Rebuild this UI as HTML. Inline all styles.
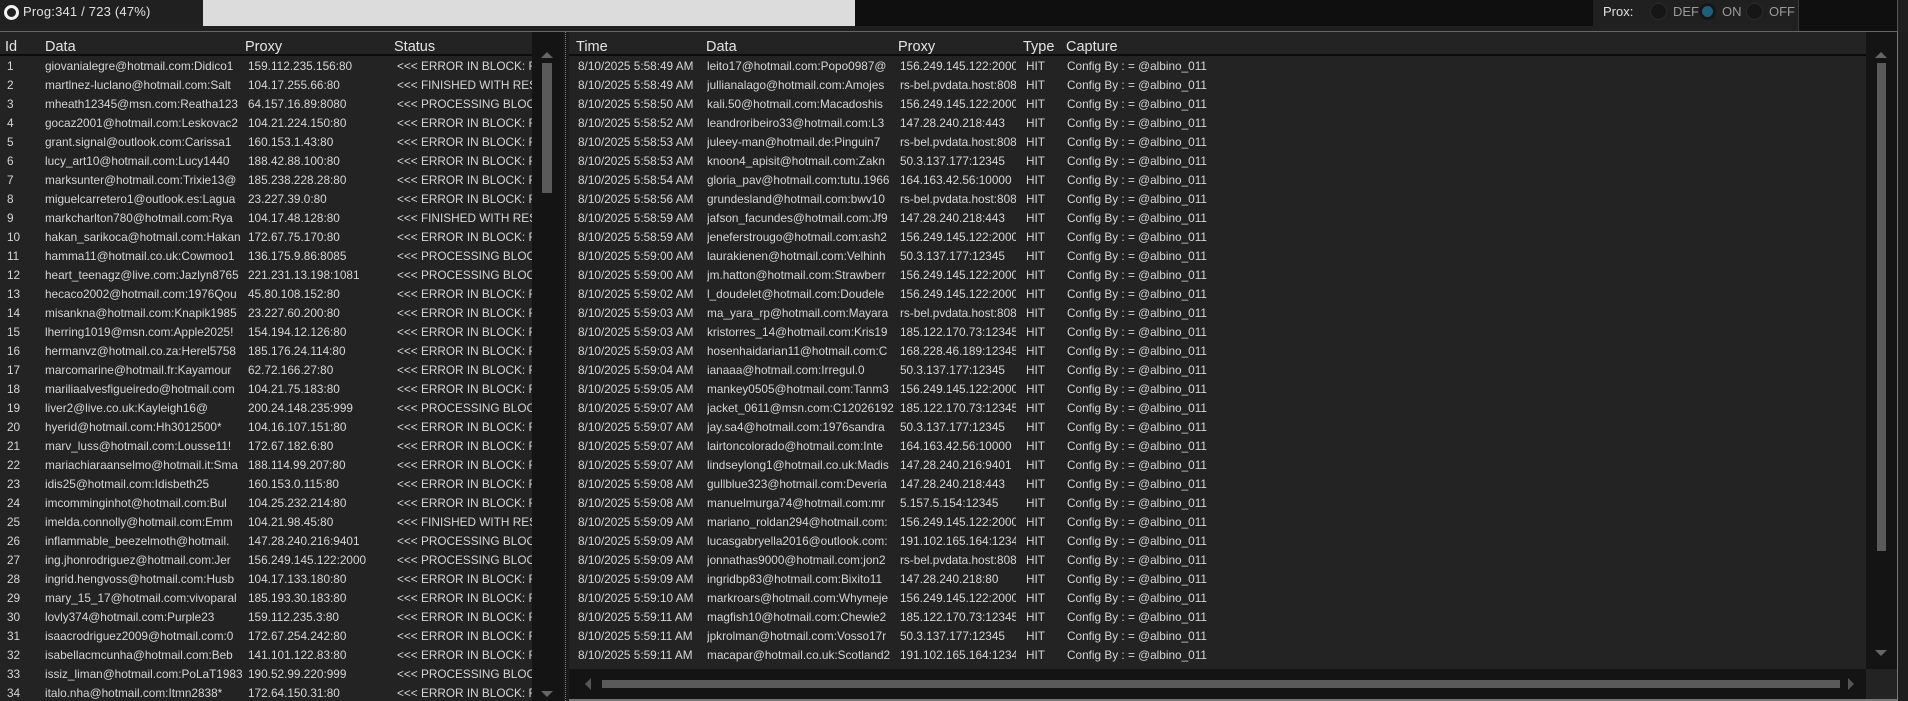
<!DOCTYPE html>
<html><head><meta charset="utf-8"><style>
*{margin:0;padding:0;box-sizing:border-box}
body{width:1908px;height:701px;background:#1e1e1e;overflow:hidden;position:relative;font-family:"Liberation Sans",sans-serif;color:#d6d6d6}
.abs{position:absolute}
.row{position:relative;height:19px;line-height:19px;font-size:11.8px;white-space:nowrap}
.row span,.hdr span{position:absolute;top:0;overflow:hidden;white-space:nowrap}
.hdr{position:absolute;height:20px;line-height:20px;font-size:14.5px;color:#e4e4e4;white-space:nowrap}
.a{left:7px;width:36px}.b{left:45px;width:198px}.c{left:248px;width:144px}.d{left:397px;width:135px}
.t{left:9px;width:128px}.e{left:138px;width:190px}.f{left:331px;width:116px}.g{left:457px;width:40px}.h{left:498px;width:300px}
</style></head><body>
<div class="abs" style="left:0;top:0;width:1908px;height:32px;background:#202020"></div>
<div class="abs" style="left:203px;top:0;width:652px;height:26px;background:#dcdcdc"></div>
<div class="abs" style="left:855px;top:0;width:738px;height:26px;background:#0f0f0f"></div>
<div class="abs" style="left:1798px;top:0;width:99px;height:31px;background:#0f0f0f;border-left:1px solid #3a3a3a"></div>
<div class="abs" style="left:1897px;top:0;width:1px;height:32px;background:#555"></div>
<div class="abs" style="left:4px;top:5px;width:15px;height:15px;border:3px solid #f2f2f2;border-radius:50%"></div>
<div class="abs" style="left:23px;top:4px;font-size:13px;line-height:16px;color:#e0e0e0;white-space:nowrap;letter-spacing:0.2px">Prog:341 / 723 (47%)</div>
<div class="abs" style="left:1603px;top:4px;font-size:13px;line-height:16px;color:#e0e0e0">Prox:</div>
<div class="abs" style="left:1650px;top:3px;width:17px;height:17px;border-radius:50%;background:#161616;border:1px solid #2a2a2a"></div>
<div class="abs" style="left:1673px;top:4px;font-size:13px;line-height:16px;color:#9a9a9a">DEF</div>
<div class="abs" style="left:1699px;top:3px;width:17px;height:17px;border-radius:50%;background:#1b5f7d;border:3px solid #161616"></div>
<div class="abs" style="left:1722px;top:4px;font-size:13px;line-height:16px;color:#9a9a9a">ON</div>
<div class="abs" style="left:1746px;top:3px;width:17px;height:17px;border-radius:50%;background:#161616;border:1px solid #2a2a2a"></div>
<div class="abs" style="left:1769px;top:4px;font-size:13px;line-height:16px;color:#9a9a9a">OFF</div>
<div class="abs" style="left:0;top:31px;width:1898px;height:1px;background:#666"></div>

<div class="abs" style="left:0;top:32px;width:563px;height:669px;background:#232323"></div>
<div class="abs" style="left:0;top:54px;width:532px;height:2px;background:#0c0c0c"></div>
<div class="abs" style="left:532px;top:32px;width:31px;height:669px;background:#141414"></div>
<div class="abs" style="left:542px;top:63px;width:10px;height:130px;background:#5a5a5a"></div>
<div class="abs" style="left:541px;top:52px;width:0;height:0;border-left:6px solid transparent;border-right:6px solid transparent;border-bottom:6px solid #666"></div>
<div class="abs" style="left:541px;top:691px;width:0;height:0;border-left:6px solid transparent;border-right:6px solid transparent;border-top:6px solid #666"></div>
<div class="abs" style="left:563px;top:32px;width:6px;height:669px;background:#1a1a1a"></div>
<div class="abs" style="left:565px;top:32px;width:0;height:669px;border-left:1px dotted #3a8fb8"></div>
<div class="hdr" style="left:0;top:37px;width:532px"><span style="left:5px">Id</span><span style="left:45px">Data</span><span style="left:245px">Proxy</span><span style="left:394px">Status</span></div>
<div class="abs" style="left:0;top:57px;width:532px;height:644px;overflow:hidden">
<div class="row"><span class="a">1</span><span class="b">giovanialegre@hotmail.com:Didico1</span><span class="c">159.112.235.156:80</span><span class="d">&lt;&lt;&lt; ERROR IN BLOCK: RE</span></div>
<div class="row"><span class="a">2</span><span class="b">martlnez-luclano@hotmail.com:Salt</span><span class="c">104.17.255.66:80</span><span class="d">&lt;&lt;&lt; FINISHED WITH RES</span></div>
<div class="row"><span class="a">3</span><span class="b">mheath12345@msn.com:Reatha123</span><span class="c">64.157.16.89:8080</span><span class="d">&lt;&lt;&lt; PROCESSING BLOCK</span></div>
<div class="row"><span class="a">4</span><span class="b">gocaz2001@hotmail.com:Leskovac2</span><span class="c">104.21.224.150:80</span><span class="d">&lt;&lt;&lt; ERROR IN BLOCK: RE</span></div>
<div class="row"><span class="a">5</span><span class="b">grant.signal@outlook.com:Carissa1</span><span class="c">160.153.1.43:80</span><span class="d">&lt;&lt;&lt; ERROR IN BLOCK: RE</span></div>
<div class="row"><span class="a">6</span><span class="b">lucy_art10@hotmail.com:Lucy1440</span><span class="c">188.42.88.100:80</span><span class="d">&lt;&lt;&lt; ERROR IN BLOCK: RE</span></div>
<div class="row"><span class="a">7</span><span class="b">marksunter@hotmail.com:Trixie13@</span><span class="c">185.238.228.28:80</span><span class="d">&lt;&lt;&lt; ERROR IN BLOCK: RE</span></div>
<div class="row"><span class="a">8</span><span class="b">miguelcarretero1@outlook.es:Lagua</span><span class="c">23.227.39.0:80</span><span class="d">&lt;&lt;&lt; ERROR IN BLOCK: RE</span></div>
<div class="row"><span class="a">9</span><span class="b">markcharlton780@hotmail.com:Rya</span><span class="c">104.17.48.128:80</span><span class="d">&lt;&lt;&lt; FINISHED WITH RES</span></div>
<div class="row"><span class="a">10</span><span class="b">hakan_sarikoca@hotmail.com:Hakan</span><span class="c">172.67.75.170:80</span><span class="d">&lt;&lt;&lt; ERROR IN BLOCK: RE</span></div>
<div class="row"><span class="a">11</span><span class="b">hamma11@hotmail.co.uk:Cowmoo1</span><span class="c">136.175.9.86:8085</span><span class="d">&lt;&lt;&lt; PROCESSING BLOCK</span></div>
<div class="row"><span class="a">12</span><span class="b">heart_teenagz@live.com:Jazlyn8765</span><span class="c">221.231.13.198:1081</span><span class="d">&lt;&lt;&lt; PROCESSING BLOCK</span></div>
<div class="row"><span class="a">13</span><span class="b">hecaco2002@hotmail.com:1976Qou</span><span class="c">45.80.108.152:80</span><span class="d">&lt;&lt;&lt; ERROR IN BLOCK: RE</span></div>
<div class="row"><span class="a">14</span><span class="b">misankna@hotmail.com:Knapik1985</span><span class="c">23.227.60.200:80</span><span class="d">&lt;&lt;&lt; ERROR IN BLOCK: RE</span></div>
<div class="row"><span class="a">15</span><span class="b">lherring1019@msn.com:Apple2025!</span><span class="c">154.194.12.126:80</span><span class="d">&lt;&lt;&lt; ERROR IN BLOCK: RE</span></div>
<div class="row"><span class="a">16</span><span class="b">hermanvz@hotmail.co.za:Herel5758</span><span class="c">185.176.24.114:80</span><span class="d">&lt;&lt;&lt; ERROR IN BLOCK: RE</span></div>
<div class="row"><span class="a">17</span><span class="b">marcomarine@hotmail.fr:Kayamour</span><span class="c">62.72.166.27:80</span><span class="d">&lt;&lt;&lt; ERROR IN BLOCK: RE</span></div>
<div class="row"><span class="a">18</span><span class="b">mariliaalvesfigueiredo@hotmail.com</span><span class="c">104.21.75.183:80</span><span class="d">&lt;&lt;&lt; ERROR IN BLOCK: RE</span></div>
<div class="row"><span class="a">19</span><span class="b">liver2@live.co.uk:Kayleigh16@</span><span class="c">200.24.148.235:999</span><span class="d">&lt;&lt;&lt; PROCESSING BLOCK</span></div>
<div class="row"><span class="a">20</span><span class="b">hyerid@hotmail.com:Hh3012500*</span><span class="c">104.16.107.151:80</span><span class="d">&lt;&lt;&lt; ERROR IN BLOCK: RE</span></div>
<div class="row"><span class="a">21</span><span class="b">marv_luss@hotmail.com:Lousse11!</span><span class="c">172.67.182.6:80</span><span class="d">&lt;&lt;&lt; ERROR IN BLOCK: RE</span></div>
<div class="row"><span class="a">22</span><span class="b">mariachiaraanselmo@hotmail.it:Sma</span><span class="c">188.114.99.207:80</span><span class="d">&lt;&lt;&lt; ERROR IN BLOCK: RE</span></div>
<div class="row"><span class="a">23</span><span class="b">idis25@hotmail.com:Idisbeth25</span><span class="c">160.153.0.115:80</span><span class="d">&lt;&lt;&lt; ERROR IN BLOCK: RE</span></div>
<div class="row"><span class="a">24</span><span class="b">imcomminginhot@hotmail.com:Bul</span><span class="c">104.25.232.214:80</span><span class="d">&lt;&lt;&lt; ERROR IN BLOCK: RE</span></div>
<div class="row"><span class="a">25</span><span class="b">imelda.connolly@hotmail.com:Emm</span><span class="c">104.21.98.45:80</span><span class="d">&lt;&lt;&lt; FINISHED WITH RES</span></div>
<div class="row"><span class="a">26</span><span class="b">inflammable_beezelmoth@hotmail.</span><span class="c">147.28.240.216:9401</span><span class="d">&lt;&lt;&lt; PROCESSING BLOCK</span></div>
<div class="row"><span class="a">27</span><span class="b">ing.jhonrodriguez@hotmail.com:Jer</span><span class="c">156.249.145.122:2000</span><span class="d">&lt;&lt;&lt; PROCESSING BLOCK</span></div>
<div class="row"><span class="a">28</span><span class="b">ingrid.hengvoss@hotmail.com:Husb</span><span class="c">104.17.133.180:80</span><span class="d">&lt;&lt;&lt; ERROR IN BLOCK: RE</span></div>
<div class="row"><span class="a">29</span><span class="b">mary_15_17@hotmail.com:vivoparal</span><span class="c">185.193.30.183:80</span><span class="d">&lt;&lt;&lt; ERROR IN BLOCK: RE</span></div>
<div class="row"><span class="a">30</span><span class="b">lovly374@hotmail.com:Purple23</span><span class="c">159.112.235.3:80</span><span class="d">&lt;&lt;&lt; ERROR IN BLOCK: RE</span></div>
<div class="row"><span class="a">31</span><span class="b">isaacrodriguez2009@hotmail.com:0</span><span class="c">172.67.254.242:80</span><span class="d">&lt;&lt;&lt; ERROR IN BLOCK: RE</span></div>
<div class="row"><span class="a">32</span><span class="b">isabellacmcunha@hotmail.com:Beb</span><span class="c">141.101.122.83:80</span><span class="d">&lt;&lt;&lt; ERROR IN BLOCK: RE</span></div>
<div class="row"><span class="a">33</span><span class="b">issiz_liman@hotmail.com:PoLaT1983</span><span class="c">190.52.99.220:999</span><span class="d">&lt;&lt;&lt; PROCESSING BLOCK</span></div>
<div class="row"><span class="a">34</span><span class="b">italo.nha@hotmail.com:Itmn2838*</span><span class="c">172.64.150.31:80</span><span class="d">&lt;&lt;&lt; ERROR IN BLOCK: RE</span></div>
</div>

<div class="abs" style="left:569px;top:32px;width:1297px;height:637px;background:#232323"></div>
<div class="abs" style="left:569px;top:54px;width:1297px;height:2px;background:#0c0c0c"></div>
<div class="abs" style="left:1866px;top:32px;width:31px;height:637px;background:#141414"></div>
<div class="abs" style="left:1877px;top:63px;width:9px;height:488px;background:#5a5a5a"></div>
<div class="abs" style="left:1875px;top:52px;width:0;height:0;border-left:6px solid transparent;border-right:6px solid transparent;border-bottom:6px solid #666"></div>
<div class="abs" style="left:1875px;top:650px;width:0;height:0;border-left:6px solid transparent;border-right:6px solid transparent;border-top:6px solid #666"></div>
<div class="abs" style="left:569px;top:669px;width:1297px;height:30px;background:#141414"></div>
<div class="abs" style="left:1866px;top:669px;width:31px;height:30px;background:#232323"></div>
<div class="abs" style="left:602px;top:680px;width:1238px;height:8px;background:#5a5a5a"></div>
<div class="abs" style="left:585px;top:678px;width:0;height:0;border-top:6px solid transparent;border-bottom:6px solid transparent;border-right:6px solid #555"></div>
<div class="abs" style="left:1848px;top:678px;width:0;height:0;border-top:6px solid transparent;border-bottom:6px solid transparent;border-left:6px solid #555"></div>
<div class="abs" style="left:569px;top:699px;width:1329px;height:2px;background:#777"></div>
<div class="abs" style="left:1897px;top:32px;width:1px;height:669px;background:#777"></div>
<div class="hdr" style="left:569px;top:37px;width:1297px"><span style="left:7px">Time</span><span style="left:137px">Data</span><span style="left:329px">Proxy</span><span style="left:454px">Type</span><span style="left:497px">Capture</span></div>
<div class="abs" style="left:569px;top:57px;width:1297px;height:612px;overflow:hidden">
<div class="row"><span class="t">8/10/2025 5:58:49 AM</span><span class="e">leito17@hotmail.com:Popo0987@</span><span class="f">156.249.145.122:2000</span><span class="g">HIT</span><span class="h">Config By : = @albino_011</span></div>
<div class="row"><span class="t">8/10/2025 5:58:49 AM</span><span class="e">jullianalago@hotmail.com:Amojes</span><span class="f">rs-bel.pvdata.host:8080</span><span class="g">HIT</span><span class="h">Config By : = @albino_011</span></div>
<div class="row"><span class="t">8/10/2025 5:58:50 AM</span><span class="e">kali.50@hotmail.com:Macadoshis</span><span class="f">156.249.145.122:2000</span><span class="g">HIT</span><span class="h">Config By : = @albino_011</span></div>
<div class="row"><span class="t">8/10/2025 5:58:52 AM</span><span class="e">leandroribeiro33@hotmail.com:L3</span><span class="f">147.28.240.218:443</span><span class="g">HIT</span><span class="h">Config By : = @albino_011</span></div>
<div class="row"><span class="t">8/10/2025 5:58:53 AM</span><span class="e">juleey-man@hotmail.de:Pinguin7</span><span class="f">rs-bel.pvdata.host:8080</span><span class="g">HIT</span><span class="h">Config By : = @albino_011</span></div>
<div class="row"><span class="t">8/10/2025 5:58:53 AM</span><span class="e">knoon4_apisit@hotmail.com:Zakn</span><span class="f">50.3.137.177:12345</span><span class="g">HIT</span><span class="h">Config By : = @albino_011</span></div>
<div class="row"><span class="t">8/10/2025 5:58:54 AM</span><span class="e">gloria_pav@hotmail.com:tutu.1966</span><span class="f">164.163.42.56:10000</span><span class="g">HIT</span><span class="h">Config By : = @albino_011</span></div>
<div class="row"><span class="t">8/10/2025 5:58:56 AM</span><span class="e">grundesland@hotmail.com:bwv10</span><span class="f">rs-bel.pvdata.host:8080</span><span class="g">HIT</span><span class="h">Config By : = @albino_011</span></div>
<div class="row"><span class="t">8/10/2025 5:58:59 AM</span><span class="e">jafson_facundes@hotmail.com:Jf9</span><span class="f">147.28.240.218:443</span><span class="g">HIT</span><span class="h">Config By : = @albino_011</span></div>
<div class="row"><span class="t">8/10/2025 5:58:59 AM</span><span class="e">jeneferstrougo@hotmail.com:ash2</span><span class="f">156.249.145.122:2000</span><span class="g">HIT</span><span class="h">Config By : = @albino_011</span></div>
<div class="row"><span class="t">8/10/2025 5:59:00 AM</span><span class="e">laurakienen@hotmail.com:Velhinh</span><span class="f">50.3.137.177:12345</span><span class="g">HIT</span><span class="h">Config By : = @albino_011</span></div>
<div class="row"><span class="t">8/10/2025 5:59:00 AM</span><span class="e">jm.hatton@hotmail.com:Strawberr</span><span class="f">156.249.145.122:2000</span><span class="g">HIT</span><span class="h">Config By : = @albino_011</span></div>
<div class="row"><span class="t">8/10/2025 5:59:02 AM</span><span class="e">l_doudelet@hotmail.com:Doudele</span><span class="f">156.249.145.122:2000</span><span class="g">HIT</span><span class="h">Config By : = @albino_011</span></div>
<div class="row"><span class="t">8/10/2025 5:59:03 AM</span><span class="e">ma_yara_rp@hotmail.com:Mayara</span><span class="f">rs-bel.pvdata.host:8080</span><span class="g">HIT</span><span class="h">Config By : = @albino_011</span></div>
<div class="row"><span class="t">8/10/2025 5:59:03 AM</span><span class="e">kristorres_14@hotmail.com:Kris19</span><span class="f">185.122.170.73:12345</span><span class="g">HIT</span><span class="h">Config By : = @albino_011</span></div>
<div class="row"><span class="t">8/10/2025 5:59:03 AM</span><span class="e">hosenhaidarian11@hotmail.com:C</span><span class="f">168.228.46.189:12345</span><span class="g">HIT</span><span class="h">Config By : = @albino_011</span></div>
<div class="row"><span class="t">8/10/2025 5:59:04 AM</span><span class="e">ianaaa@hotmail.com:Irregul.0</span><span class="f">50.3.137.177:12345</span><span class="g">HIT</span><span class="h">Config By : = @albino_011</span></div>
<div class="row"><span class="t">8/10/2025 5:59:05 AM</span><span class="e">mankey0505@hotmail.com:Tanm3</span><span class="f">156.249.145.122:2000</span><span class="g">HIT</span><span class="h">Config By : = @albino_011</span></div>
<div class="row"><span class="t">8/10/2025 5:59:07 AM</span><span class="e">jacket_0611@msn.com:C12026192</span><span class="f">185.122.170.73:12345</span><span class="g">HIT</span><span class="h">Config By : = @albino_011</span></div>
<div class="row"><span class="t">8/10/2025 5:59:07 AM</span><span class="e">jay.sa4@hotmail.com:1976sandra</span><span class="f">50.3.137.177:12345</span><span class="g">HIT</span><span class="h">Config By : = @albino_011</span></div>
<div class="row"><span class="t">8/10/2025 5:59:07 AM</span><span class="e">lairtoncolorado@hotmail.com:Inte</span><span class="f">164.163.42.56:10000</span><span class="g">HIT</span><span class="h">Config By : = @albino_011</span></div>
<div class="row"><span class="t">8/10/2025 5:59:07 AM</span><span class="e">lindseylong1@hotmail.co.uk:Madis</span><span class="f">147.28.240.216:9401</span><span class="g">HIT</span><span class="h">Config By : = @albino_011</span></div>
<div class="row"><span class="t">8/10/2025 5:59:08 AM</span><span class="e">gullblue323@hotmail.com:Deveria</span><span class="f">147.28.240.218:443</span><span class="g">HIT</span><span class="h">Config By : = @albino_011</span></div>
<div class="row"><span class="t">8/10/2025 5:59:08 AM</span><span class="e">manuelmurga74@hotmail.com:mr</span><span class="f">5.157.5.154:12345</span><span class="g">HIT</span><span class="h">Config By : = @albino_011</span></div>
<div class="row"><span class="t">8/10/2025 5:59:09 AM</span><span class="e">mariano_roldan294@hotmail.com:</span><span class="f">156.249.145.122:2000</span><span class="g">HIT</span><span class="h">Config By : = @albino_011</span></div>
<div class="row"><span class="t">8/10/2025 5:59:09 AM</span><span class="e">lucasgabryella2016@outlook.com:</span><span class="f">191.102.165.164:1234</span><span class="g">HIT</span><span class="h">Config By : = @albino_011</span></div>
<div class="row"><span class="t">8/10/2025 5:59:09 AM</span><span class="e">jonnathas9000@hotmail.com:jon2</span><span class="f">rs-bel.pvdata.host:8080</span><span class="g">HIT</span><span class="h">Config By : = @albino_011</span></div>
<div class="row"><span class="t">8/10/2025 5:59:09 AM</span><span class="e">ingridbp83@hotmail.com:Bixito11</span><span class="f">147.28.240.218:80</span><span class="g">HIT</span><span class="h">Config By : = @albino_011</span></div>
<div class="row"><span class="t">8/10/2025 5:59:10 AM</span><span class="e">markroars@hotmail.com:Whymeje</span><span class="f">156.249.145.122:2000</span><span class="g">HIT</span><span class="h">Config By : = @albino_011</span></div>
<div class="row"><span class="t">8/10/2025 5:59:11 AM</span><span class="e">magfish10@hotmail.com:Chewie2</span><span class="f">185.122.170.73:12345</span><span class="g">HIT</span><span class="h">Config By : = @albino_011</span></div>
<div class="row"><span class="t">8/10/2025 5:59:11 AM</span><span class="e">jpkrolman@hotmail.com:Vosso17r</span><span class="f">50.3.137.177:12345</span><span class="g">HIT</span><span class="h">Config By : = @albino_011</span></div>
<div class="row"><span class="t">8/10/2025 5:59:11 AM</span><span class="e">macapar@hotmail.co.uk:Scotland2</span><span class="f">191.102.165.164:1234</span><span class="g">HIT</span><span class="h">Config By : = @albino_011</span></div>
</div>
</body></html>
